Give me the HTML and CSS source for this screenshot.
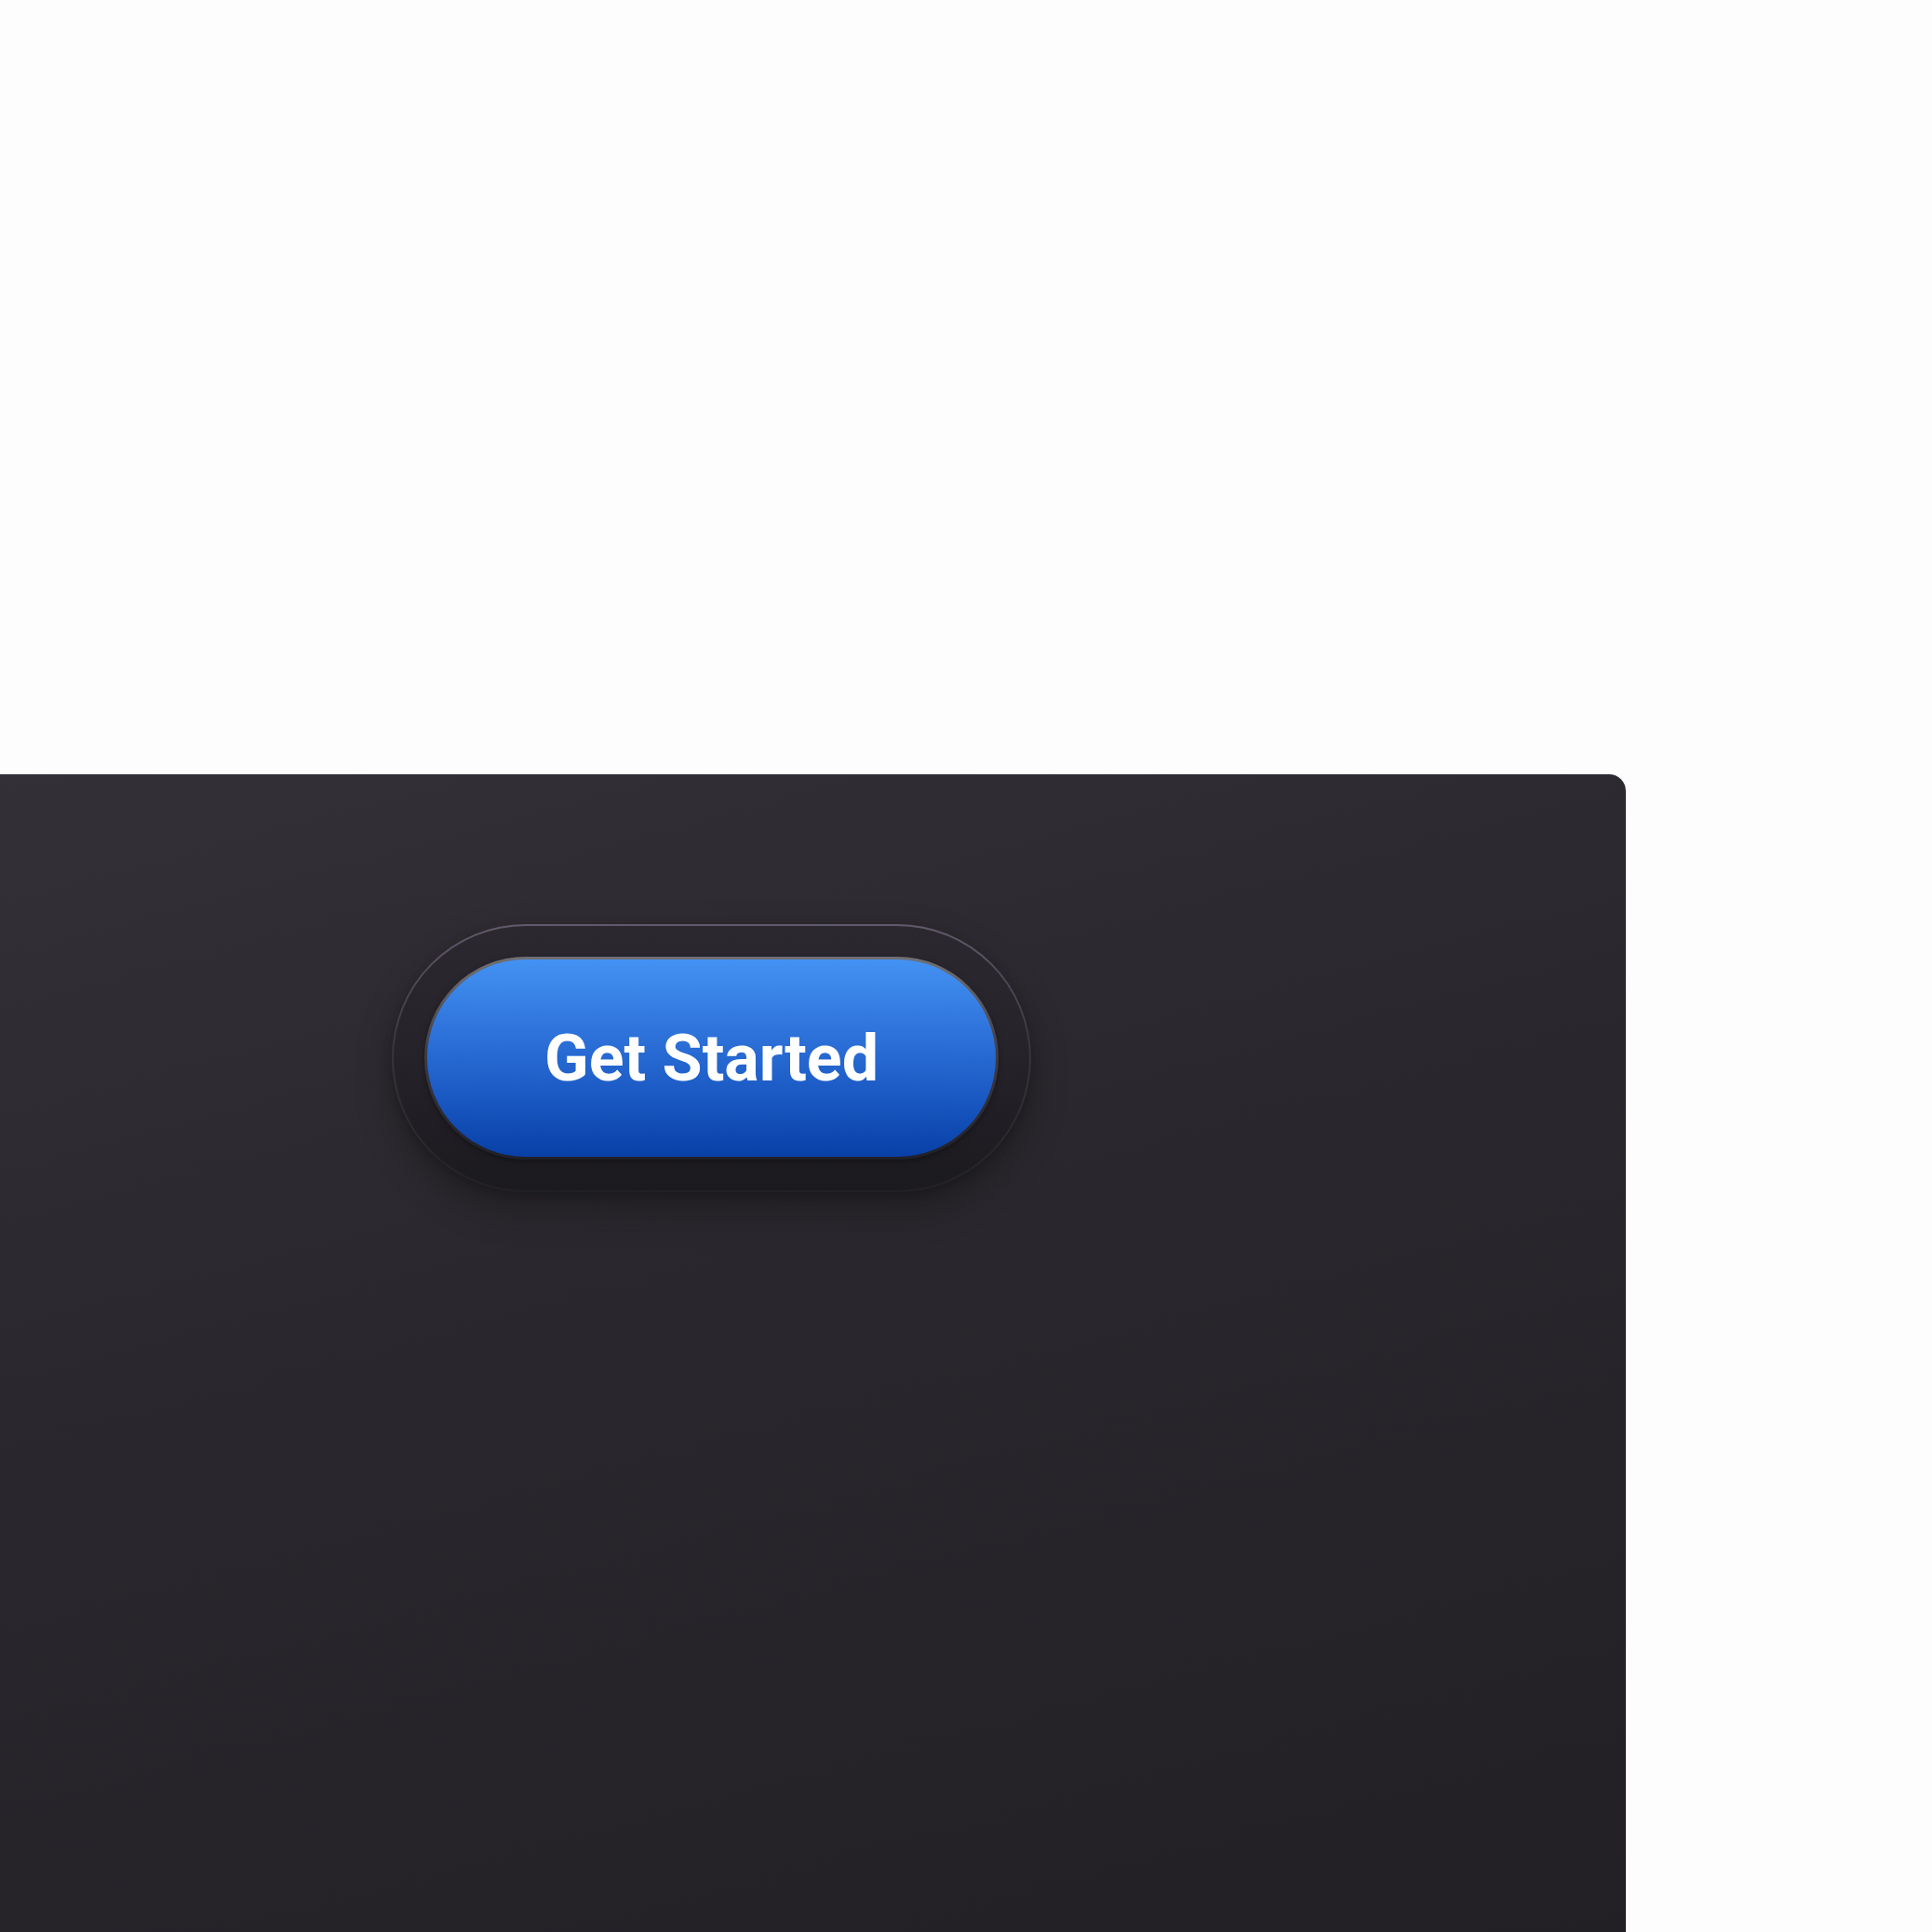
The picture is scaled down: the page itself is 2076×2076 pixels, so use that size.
FILE: index.html
```html
<!DOCTYPE html>
<html>
<head>
<meta charset="utf-8">
<link rel="stylesheet" href="styles.css">
</head>
<body>
<div class="panel">
  <div class="pill-frame">
    <button class="pill-btn">Get Started</button>
  </div>
</div>
</body>
</html>
```
FILE: styles.css
```css
html, body {
  margin: 0;
  padding: 0;
  background: #fdfdfd;
  width: 2076px;
  height: 2076px;
  overflow: hidden;
}
.panel {
  margin-top: 832px;
  width: 1747px;
  height: 1244px;
  box-sizing: border-box;
  padding: 161px 0 0 421px;
  border-radius: 0 18px 0 0;
  background: linear-gradient(165deg, #333037 0%, #2a282e 40%, #222025 100%);
}
.pill-frame {
  width: 687px;
  height: 288px;
  box-sizing: border-box;
  border-radius: 9999px;
  border: 2px solid transparent;
  background:
    linear-gradient(180deg, #2b2830 0%, #26232a 45%, #1b1a1f 100%) padding-box,
    linear-gradient(180deg, #615a6b 0%, #3a3640 45%, #222026 100%) border-box;
  box-shadow: 0 18px 40px rgba(0, 0, 0, 0.28), 0 4px 10px rgba(0, 0, 0, 0.18);
  display: flex;
  align-items: center;
  justify-content: center;
}
.pill-btn {
  width: 617px;
  height: 218px;
  margin-top: -1px;
  box-sizing: border-box;
  border-radius: 9999px;
  border: 3px solid transparent;
  background:
    linear-gradient(180deg, #4392f2 0%, #2f74dc 35%, #1a58c2 70%, #0840a6 100%) padding-box,
    linear-gradient(180deg, #707076 0%, #3c3b44 50%, #202028 100%) border-box;
  box-shadow: 0 2px 6px rgba(0, 0, 0, 0.35);
  color: #ffffff;
  font-family: Roboto, "Liberation Sans", Arial, sans-serif;
  font-weight: 700;
  font-size: 70px;
  letter-spacing: 0;
  padding: 0;
  display: flex;
  align-items: center;
  justify-content: center;
  cursor: pointer;
}
```
